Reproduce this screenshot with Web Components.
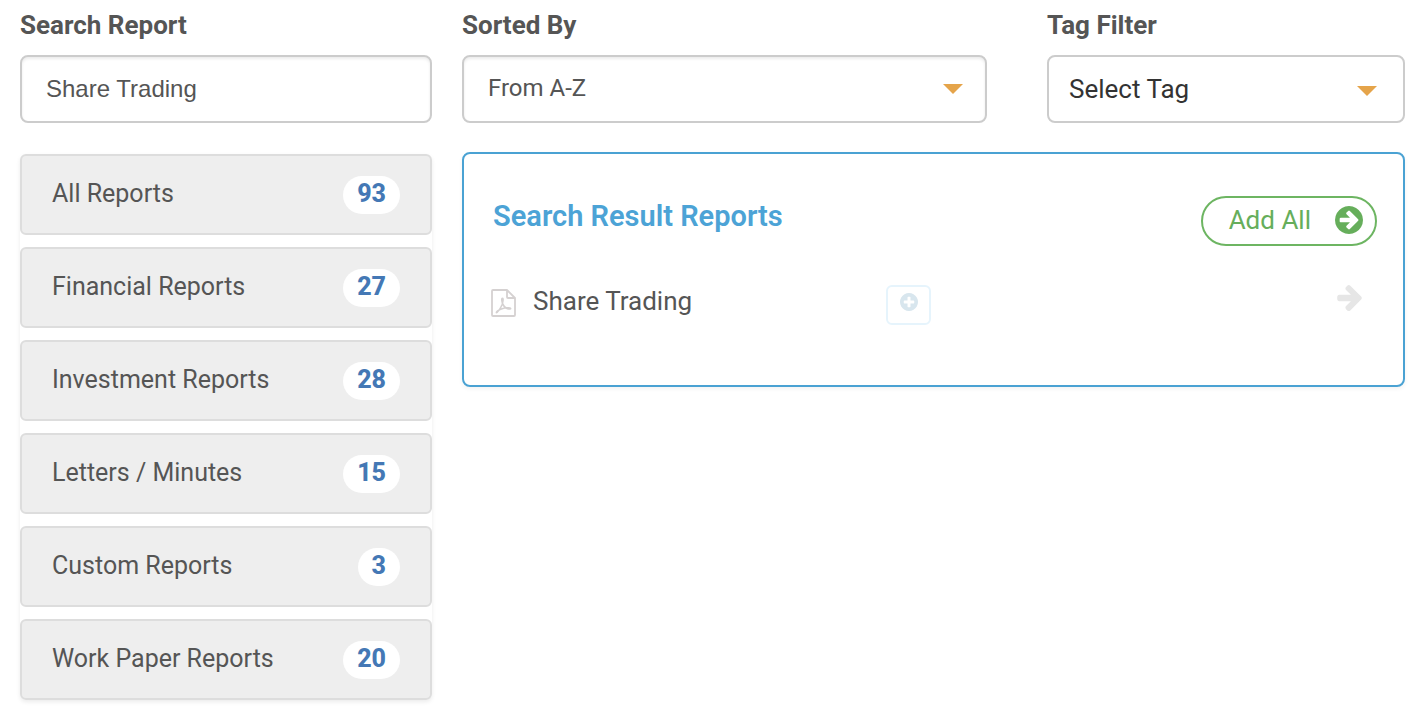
<!DOCTYPE html>
<html lang="en">
<head>
<meta charset="utf-8">
<title>Reports</title>
<style>
  body { margin: 0; background: #fff; color: #555; font: 25px/32px Roboto, "Liberation Sans", sans-serif; }
</style>
</head>
<body>
<report-browser></report-browser>

<script>
const CIRCLE = 'M1664 896q0 209-103 385.5t-279.5 279.5-385.5 103-385.5-103-279.5-279.5-103-385.5 103-385.5 279.5-279.5 385.5-103 385.5 103 279.5 279.5 103 385.5z';
const ICONS = {
  caret: '<svg viewBox="0 0 20 10"><path d="M0 0h20L10 10z"/></svg>',
  circleArrow: `<svg viewBox="128 128 1536 1536"><path fill-rule="evenodd" d="${CIRCLE}M1413 896q0-27-18-45l-91-91-362-362q-18-18-45-18t-45 18l-91 91q-18 18-18 45t18 45l189 189h-502q-26 0-45 19t-19 45v128q0 26 19 45t45 19h502l-189 189q-19 19-19 45t19 45l91 91q18 18 45 18t45-18l362-362 91-91q18-18 18-45z"/></svg>`,
  circlePlus: `<svg viewBox="128 128 1536 1536"><path fill-rule="evenodd" d="${CIRCLE}M1344 960v-128q0-26-19-45t-45-19h-256v-256q0-26-19-45t-45-19h-128q-26 0-45 19t-19 45v256h-256q-26 0-45 19t-19 45v128q0 26 19 45t45 19h256v256q0 26 19 45t45 19h128q26 0 45-19t19-45v-256h256q26 0 45-19t19-45z"/></svg>`,
  arrow: '<svg viewBox="0 181 1472 1558"><path d="M1472 960q0 54-37 91l-651 651q-39 37-91 37-51 0-90-37l-75-75q-38-38-38-91t38-91l293-293h-704q-52 0-84.5-37.5t-32.5-90.5v-128q0-53 32.5-90.5t84.5-37.5h704l-293-294q-38-36-38-90t38-90l75-75q38-38 90-38 53 0 91 38l651 651q37 35 37 90z"/></svg>',
  pdf: '<svg viewBox="0 0 25 28" fill="none" stroke="currentColor" stroke-linejoin="round"><path stroke-width="1.8" d="M16 1H2Q1 1 1 2v24q0 1 1 1h21q1 0 1-1V9zM16 1v7q0 1 1 1h7"/><path stroke-width="1.5" stroke-linecap="round" d="M11.500 9.300c-1.300 0-.7 3.300.1 5.300 1 2.500 2.700 4.400 4.900 5.200 1.400.4 3.300.5 3.300-.2 0-.9-3.200-1.200-6.200-.6-3.200.7-5.300 1.600-7 2.900-1.100.9-1.600 1.800-1.100 1.800 1.200 0 4.200-4.700 5.500-7.900.9-2.600 1.700-6.500.5-6.500z"/></svg>'
};

function define(name, html, setup) {
  const template = document.createElement('template');
  template.innerHTML = html;
  customElements.define(name, class extends HTMLElement {
    constructor() {
      super();
      this.attachShadow({ mode: 'open' }).append(template.content.cloneNode(true));
    }
    connectedCallback() { if (setup) setup(this, this.shadowRoot); }
  });
}

define('ui-icon', `
  <style>
    :host { display: block; flex: none; }
    svg { display: block; width: 100%; height: 100%; fill: currentColor; }
    svg[fill=none] { fill: none; }
  </style><span></span>`,
  (host, root) => { root.querySelector('span').innerHTML = ICONS[host.getAttribute('name')]; });

const FIELD_STYLE = `
  :host { display: block; min-width: 0; }
  label { display: block; padding: 9px 0 14px; font-size: 26px; font-weight: 700; }
  input, select {
    display: block; box-sizing: border-box; width: 100%; height: 68px; margin: 0;
    border: 2px solid #ccc; border-radius: 8px; background: #fff;
    color: inherit; appearance: none; outline-color: #4aa2d3;
  }`;

define('text-field', `
  <style>${FIELD_STYLE}
    input { padding: 0 24px; font: 24px/32px "Liberation Sans", Arial, sans-serif; box-shadow: inset 0 2px 3px rgba(0,0,0,.08); }
  </style>
  <label for="control"></label><input id="control" type="text">`,
  (host, root) => {
    root.querySelector('label').textContent = host.getAttribute('label');
    root.querySelector('input').value = host.getAttribute('value');
  });

define('select-field', `
  <style>${FIELD_STYLE}
    .box { display: grid; align-items: center; }
    select, ui-icon { grid-area: 1 / 1; }
    select { padding: 0 56px 2px 24px; font: inherit; font-size: 24px; box-shadow: inset 0 2px 3px rgba(0,0,0,.08); }
    ui-icon { justify-self: end; width: 20px; height: 10px; margin-right: 24px; color: #e5a44a; pointer-events: none; }
    :host([plain]) select { padding: 0 56px 0 20px; font-size: 26px; color: #333; box-shadow: none; }
    :host([plain]) ui-icon { margin: 4px 28px 0 0; }
  </style>
  <label for="control"></label>
  <div class="box"><select id="control"></select><ui-icon name="caret"></ui-icon></div>`,
  (host, root) => {
    root.querySelector('label').textContent = host.getAttribute('label');
    root.querySelector('select').append(new Option(host.getAttribute('value')));
  });

define('category-item', `
  <style>
    :host { display: block; }
    button {
      display: flex; align-items: center; justify-content: space-between; box-sizing: border-box;
      width: 100%; height: 81px; padding: 0 30px; border: 2px solid #ddd; border-radius: 6px;
      background: #eee; color: inherit; font: inherit; text-align: left; cursor: pointer;
    }
    .name { padding-bottom: 2px; }
    .count { padding: 2px 14px 4px; border-radius: 19px; background: #fff; color: #4478b5; font-weight: 800; }
  </style>
  <button type="button"><span class="name"><slot></slot></span><span class="count"></span></button>`,
  (host, root) => { root.querySelector('.count').textContent = host.getAttribute('count'); });

define('category-list', `
  <style>
    :host { display: flex; flex-direction: column; gap: 12px; border-radius: 6px; box-shadow: 0 2px 4px rgba(0,0,0,.08); }
  </style><slot></slot>`);

define('result-row', `
  <style>
    :host { display: grid; grid-template-columns: 395fr 491fr; font-size: 26px; }
    .name { display: flex; gap: 17px; }
    .name ui-icon { width: 25px; height: 28px; margin-top: 4px; color: #d5d1d1; }
    .tools { display: flex; justify-content: space-between; padding-right: 15px; }
    button { padding: 0; border: 0; background: none; cursor: pointer; }
    .add { display: flex; justify-content: center; box-sizing: border-box; width: 45px; height: 40px; padding-top: 6px; border: 2px solid #e6f4fc; border-radius: 6px; color: #d8e6ee; }
    .add ui-icon { width: 18px; height: 18px; }
    .go { align-self: flex-start; color: #e6e6e6; }
    .go ui-icon { width: 25px; height: 26px; }
  </style>
  <div class="name"><ui-icon name="pdf"></ui-icon><span><slot></slot></span></div>
  <div class="tools">
    <button class="add" type="button" aria-label="Add report"><ui-icon name="circlePlus"></ui-icon></button>
    <button class="go" type="button" aria-label="Move report"><ui-icon name="arrow"></ui-icon></button>
  </div>`);

define('result-panel', `
  <style>
    :host { display: block; padding: 42px 26px 60px 27px; border: 2px solid #4aa2d3; border-radius: 8px; box-shadow: 0 2px 4px rgba(0,0,0,.05); }
    header { display: flex; justify-content: space-between; align-items: flex-start; margin-bottom: 39px; }
    h2 { margin: 0; padding-left: 2px; color: #4ca3d6; font-size: 29px; line-height: 40px; font-weight: 600; }
    button {
      display: flex; align-items: center; gap: 24px; box-sizing: border-box; height: 50px;
      padding: 0 12px 2px 26px; border: 2px solid #6db562; border-radius: 25px;
      background: #fff; color: #66ae5b; font: inherit; font-size: 26px; cursor: pointer;
    }
    button ui-icon { width: 28px; height: 28px; }
  </style>
  <header>
    <h2></h2>
    <button type="button">Add All<ui-icon name="circleArrow"></ui-icon></button>
  </header>
  <slot></slot>`,
  (host, root) => { root.querySelector('h2').textContent = host.getAttribute('heading'); });

define('report-browser', `
  <style>
    :host { display: grid; grid-template-columns: 412fr 943fr; gap: 30px; align-items: start; padding: 0 15px 16px 20px; }
    aside { display: grid; gap: 31px; }
    main { display: grid; gap: 29px; }
    .filters { display: grid; grid-template-columns: 525fr 358fr; gap: 60px; }
  </style>
  <aside>
    <text-field label="Search Report" value="Share Trading"></text-field>
    <category-list>
      <category-item count="93">All Reports</category-item>
      <category-item count="27">Financial Reports</category-item>
      <category-item count="28">Investment Reports</category-item>
      <category-item count="15">Letters / Minutes</category-item>
      <category-item count="3">Custom Reports</category-item>
      <category-item count="20">Work Paper Reports</category-item>
    </category-list>
  </aside>
  <main>
    <div class="filters">
      <select-field label="Sorted By" value="From A-Z"></select-field>
      <select-field plain label="Tag Filter" value="Select Tag"></select-field>
    </div>
    <result-panel heading="Search Result Reports">
      <result-row>Share Trading</result-row>
    </result-panel>
  </main>`);
</script>
</body>
</html>
